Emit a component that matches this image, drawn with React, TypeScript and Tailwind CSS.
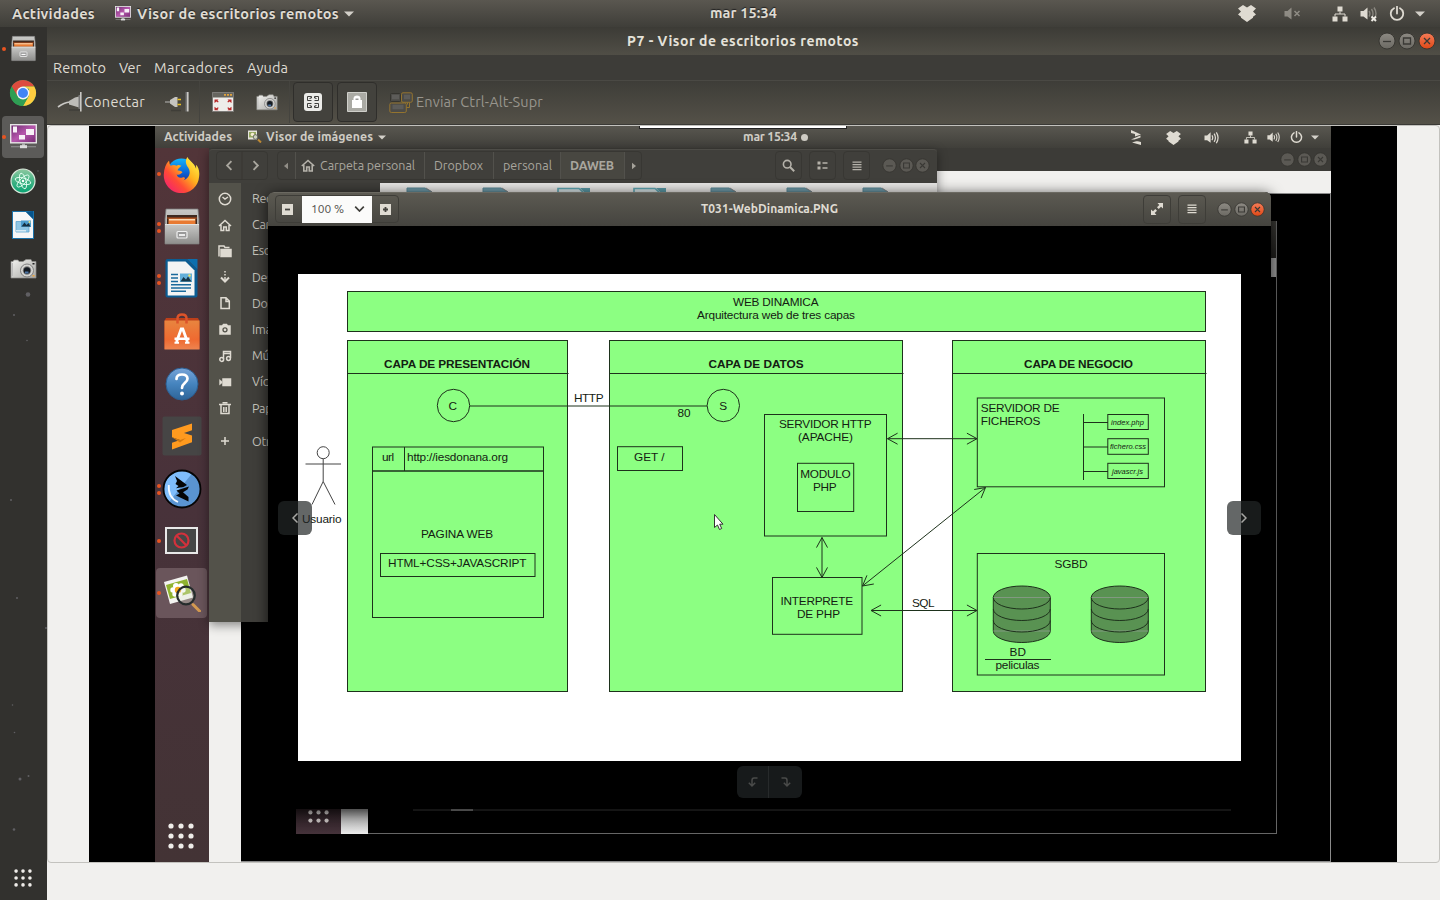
import React, { useLayoutEffect, useRef, useState } from "react";

/* One line of text whose letter spacing is tuned so that it fills a given width. */
function Label({ w, className = "", children }: { w: number; className?: string; children: string }) {
  const ref = useRef<HTMLSpanElement>(null);
  const [spacing, setSpacing] = useState(0);
  useLayoutEffect(() => {
    const el = ref.current;
    if (el) setSpacing((w - el.getBoundingClientRect().width) / children.length);
  }, [w, children]);
  return (
    <span className="block shrink-0 whitespace-nowrap" style={{ width: w }}>
      <span ref={ref} className={`inline-block ${className}`} style={{ letterSpacing: spacing }}>
        {children}
      </span>
    </span>
  );
}

type P = { className?: string };

const Caret = ({ className = "" }: P) => (
  <svg viewBox="0 0 10 6" className={`shrink-0 ${className}`}><path d="M0 .5h10L5 5.5z" fill="#d3d0c9" /></svg>
);

const Dropbox = ({ className = "" }: P) => (
  <svg viewBox="0 0 18 17" className={`shrink-0 ${className}`}>
    <path d="M5 0l4 2.5L13 0l5 3.5-3 3 3 3-3 2.2v1.1L9 17l-6-4.2v-1.1L0 9.500l3-3-3-3z" fill="#dfdbd2" />
  </svg>
);

const Network = ({ className = "" }: P) => (
  <svg viewBox="0 0 16 16" className={`shrink-0 ${className}`}>
    <path d="M5.500 .5h5v5h-5zM.5 10.500h5v5h-5zM10.500 10.500h5v5h-5z" fill="#dfdbd2" />
    <path d="M8 5.500v2.500M3 10.500V8h10v2.500" fill="none" stroke="#dfdbd2" />
  </svg>
);

const Power = ({ className = "" }: P) => (
  <svg viewBox="0 0 16 16" className={`shrink-0 ${className}`}>
    <path d="M5 2.200a6.200 6.200 0 1 0 6 0M8 .5v7" fill="none" stroke="#dfdbd2" strokeWidth="1.800" strokeLinecap="round" />
  </svg>
);

const Speaker = ({ className = "", kind }: P & { kind: "off" | "muted" | "on" | "wide" }) => (
  <svg viewBox="0 0 17 16" className={`shrink-0 ${className}`}>
    <path d="M.5 5H3.500L7.500 1.500v12L3.500 10.500H.5z" fill="#dfdbd2" />
    {kind === "off" && <path d="M10.500 5l5 5m0-5l-5 5" stroke="#dfdbd2" strokeWidth="1.500" />}
    {kind !== "off" && (
      <g fill="none" stroke="#dfdbd2" strokeWidth="1.400" opacity={kind === "muted" ? 0.4 : 1}>
        <path d="M9 5q1.800 2.700 0 5.500M11.500 3q3 4.700 0 9.500M14 1.500q4 6 0 12.500" />
      </g>
    )}
    {kind === "muted" && <path d="M11.500 10.500l4.500 4.500m0-4.500l-4.500 4.500" stroke="#eeebe4" strokeWidth="1.900" />}
  </svg>
);

const VinagreIcon = ({ className = "" }: P) => (
  <svg viewBox="0 0 27 25" className={`shrink-0 ${className}`}>
    <defs>
      <linearGradient id="vin" x1="0" y1="0" x2="1" y2="1">
        <stop offset="0" stopColor="#6b2a6d" /><stop offset=".5" stopColor="#b658ad" /><stop offset="1" stopColor="#752a73" />
      </linearGradient>
    </defs>
    <rect x=".7" y=".7" width="25.600" height="18.100" fill="url(#vin)" stroke="#e6e6e6" strokeWidth="1.400" />
    <path d="M3 2.500h4v6H3zM16 5h8v6h-8zM9 11h6v4.500H9z" fill="#f7f1f7" />
    <path d="M12 19h3v3h-3z" fill="#aaa" /><path d="M1 22.700h25" stroke="#8c8c8c" strokeWidth="1.200" />
    <path d="M10 21.200h7v3h-7z" fill="#ddd" />
  </svg>
);

const FilesIcon = ({ className = "" }: P) => (
  <svg viewBox="0 0 36 37" className={`shrink-0 ${className}`}>
    <defs>
      <linearGradient id="cab" x1="0" y1="0" x2="0" y2="1"><stop offset="0" stopColor="#c9c9c7" /><stop offset="1" stopColor="#8f8f8d" /></linearGradient>
    </defs>
    <path d="M2 1h32l1 10v25H1V11z" fill="url(#cab)" stroke="#777" strokeWidth=".8" />
    <path d="M3 7h30v10H3z" fill="#3e2a20" /><path d="M3 9h30v2H3z" fill="#7a3a1c" />
    <path d="M4.500 10.500h27v5.500h-27z" fill="#e87a32" /><path d="M5 11h26v1.500H5z" fill="#fbd9b4" />
    <path d="M1 16h34v19.500H1z" fill="url(#cab)" /><path d="M1 16.500h34" stroke="#e2e2e0" />
    <rect x="13" y="23.500" width="10" height="6.500" rx="1" fill="#999" stroke="#f0f0f0" strokeWidth="1.200" />
    <path d="M15 27h6" stroke="#fff" strokeWidth="1.600" />
  </svg>
);

const ChromeIcon = ({ className = "" }: P) => (
  <svg viewBox="0 0 28 28" className={`shrink-0 ${className}`}>
    <circle cx="14" cy="14" r="13" fill="#2f9e54" />
    <path d="M2.740 7.500A13 13 0 0 1 25.260 7.500H14L8.400 17.200z" fill="#dd4b3e" />
    <path d="M25.260 7.500A13 13 0 0 1 14 27l5.600-9.700L20 10l-6-2.500z" fill="#ffcd40" />
    <path d="M2.740 7.500L8.400 17.200 14 20l5.600-2.700L14 27A13 13 0 0 1 2.740 7.500z" fill="#2f9e54" />
    <circle cx="14" cy="14" r="6.400" fill="#f5f5f5" /><circle cx="14" cy="14" r="5" fill="#4285f4" />
  </svg>
);

const AtomIcon = ({ className = "" }: P) => (
  <svg viewBox="0 0 26 26" className={`shrink-0 ${className}`}>
    <defs><linearGradient id="atom" x1="0" y1="0" x2="0" y2="1"><stop offset="0" stopColor="#8dc9a0" /><stop offset=".55" stopColor="#3eb183" /><stop offset="1" stopColor="#08a373" /></linearGradient></defs>
    <circle cx="13" cy="13" r="12" fill="url(#atom)" stroke="#dce8dc" strokeWidth="1.200" />
    <g fill="none" stroke="#e5fff2" strokeWidth=".9">
      <ellipse cx="13" cy="13" rx="8" ry="3" transform="rotate(15 13 13)" />
      <ellipse cx="13" cy="13" rx="8" ry="3" transform="rotate(75 13 13)" />
      <ellipse cx="13" cy="13" rx="8" ry="3" transform="rotate(135 13 13)" />
    </g>
    <circle cx="13" cy="13" r="1.200" fill="#fff" />
  </svg>
);

const DrawDocIcon = ({ className = "" }: P) => (
  <svg viewBox="0 0 22 28" className={`shrink-0 ${className}`}>
    <path d="M0 0h22v28H0z" fill="#1b71a8" /><path d="M1 1h13l7 7v19H1z" fill="#f6f6f6" /><path d="M14 1l7 7V0z" fill="#07548b" />
    <path d="M4 10.500h13V21H4z" fill="#8fc6e5" stroke="#5ea6d0" strokeWidth=".8" />
    <path d="M9 9.500h10V16H9z" fill="#4d9dce" /><path d="M9.500 15.500l3-4 2 2.500 2-2 2 3.500z" fill="#163040" /><circle cx="17.500" cy="11" r="1" fill="#e8e27a" />
    <path d="M4 19h10v1.500H4z" fill="#d6eaf4" />
  </svg>
);

const WriterIcon = ({ className = "" }: P) => (
  <svg viewBox="0 0 33 39" className={`shrink-0 ${className}`}>
    <path d="M2.500 0H22l10.500 10.500V36.500a2 2 0 0 1-2 2h-28a2 2 0 0 1-2-2V2a2 2 0 0 1 2-2z" fill="#0b5c92" />
    <path d="M2.700 2.500h17.800l9 9V36.500H2.700z" fill="#f3f4f4" /><path d="M22 0h10.500v10.500z" fill="#0d6fae" />
    <path d="M6 15.500h7M6 19h7M6 22.500h7M6 25.800h20M6 29h20M6 32.300h15" stroke="#1b6a9c" strokeWidth="1.400" />
    <path d="M15 14.500h12v8.500H15z" fill="#62afd9" /><path d="M15.500 22.500l3-4.500 2.500 2.500 2-3 3.500 5z" fill="#17384a" /><circle cx="24.500" cy="16.500" r="1.200" fill="#f0e060" />
  </svg>
);

const CameraIcon = ({ className = "" }: P) => (
  <svg viewBox="0 0 27 20" className={`shrink-0 ${className}`}>
    <defs><linearGradient id="cam" x1="0" y1="0" x2="1" y2="1"><stop offset="0" stopColor="#f2f2ef" /><stop offset="1" stopColor="#a7a7a4" /></linearGradient></defs>
    <path d="M1 2.500h2L4 1h4l1 1.500h4L16 .5h5L22 2.500h4V19H1z" fill="url(#cam)" stroke="#8b8b88" strokeWidth=".7" />
    <circle cx="17" cy="11.500" r="6.500" fill="#d5d5d2" stroke="#777" strokeWidth=".9" /><circle cx="17" cy="11.500" r="4.200" fill="#777" />
    <circle cx="17" cy="11.500" r="3.200" fill="#151b22" /><path d="M15 12.500h3.500v2H15z" fill="#4d75a5" />
    <path d="M2.500 4v13" stroke="#bbb" /><path d="M22.500 4h2v1.500h-2z" fill="#222" /><path d="M22.500 16h2v1.500h-2z" fill="#eba13a" />
  </svg>
);

const FirefoxIcon = ({ className = "" }: P) => (
  <svg viewBox="0 0 38 38" className={`shrink-0 ${className}`}>
    <defs>
      <linearGradient id="ffx" x1="1" y1="0" x2="0" y2="1"><stop offset=".1" stopColor="#fff044" /><stop offset=".4" stopColor="#ffb01e" /><stop offset=".65" stopColor="#ff4c35" /><stop offset="1" stopColor="#f01285" /></linearGradient>
      <linearGradient id="ffb" x1="0" y1="0" x2="0" y2="1"><stop offset="0" stopColor="#12b5fb" /><stop offset=".5" stopColor="#0b63d6" /><stop offset="1" stopColor="#2c1672" /></linearGradient>
    </defs>
    <circle cx="19" cy="17" r="14.500" fill="url(#ffb)" />
    <path d="M25 1c-3 5-1 8 1 11 3 5 1 11-5 13 3-2 1-4-1-3-3 1-5 0-6-3 3 1 4-1 6-2-1-2-4-2-5-2 0-2 2-3 4-5-3-1-4-1-5 0-2-1-4-1-6 0-2-2-1-4-2-5C3 8 1 13 .8 19a18 18 0 0 0 36.300 2c.8-6-1.100-10-3.100-12v4c-2-6-6-7-9-12z" fill="url(#ffx)" />
  </svg>
);

const SoftwareIcon = ({ className = "" }: P) => (
  <svg viewBox="0 0 36 37" className={`shrink-0 ${className}`}>
    <defs><linearGradient id="bag" x1="0" y1="0" x2="0" y2="1"><stop offset="0" stopColor="#e8853f" /><stop offset=".65" stopColor="#ef6a31" /><stop offset="1" stopColor="#ee8450" /></linearGradient></defs>
    <path d="M2 5h32l1.500 3v28H.5V8z" fill="#bd3f1a" /><path d="M.5 7.500h35V36.500H.5z" fill="url(#bag)" />
    <path d="M13.500 10.500V5.500q0-4 4.500-4t4.500 4v5" fill="none" stroke="#dc532a" strokeWidth="2.500" />
    <path d="M12.500 29l4.700-13h1.600l4.700 13" fill="none" stroke="#fff" strokeWidth="2.800" /><path d="M10.500 24.500h15v2.500h-15z" fill="#fff" />
    <path d="M10.500 29.800h4.500m6 0h4.500" stroke="#fff" strokeWidth="2" />
  </svg>
);

const HelpIcon = ({ className = "" }: P) => (
  <svg viewBox="0 0 34 34" className={`shrink-0 ${className}`}>
    <defs><linearGradient id="hlp" x1="0" y1="0" x2="0" y2="1"><stop offset="0" stopColor="#78a4d8" /><stop offset=".5" stopColor="#4584be" /><stop offset="1" stopColor="#2d6498" /></linearGradient></defs>
    <circle cx="17" cy="17" r="16" fill="url(#hlp)" stroke="#2c5f92" />
    <path d="M11.500 12q0-4.500 5.500-4.500t5.500 4.300c0 4-5.500 4.200-5.500 9.200" fill="none" stroke="#fff" strokeWidth="2.700" strokeLinecap="round" /><circle cx="17" cy="26.500" r="2" fill="#fff" />
  </svg>
);

const SublimeIcon = ({ className = "" }: P) => (
  <svg viewBox="0 0 40 40" className={`shrink-0 ${className}`}>
    <rect x=".5" y=".5" width="39" height="39" rx="2" fill="#464545" />
    <path d="M10 14l20-6.500v6.700l-8 2.700 8 2.600v6.700L10 33.500V26.800l8-2.800-8-2.700z" fill="#ff9a1f" /><path d="M10 21.300l8 2.700 6-2-6 4.500z" fill="#d67a10" />
  </svg>
);

const ZealIcon = ({ className = "" }: P) => (
  <svg viewBox="0 0 40 40" className={`shrink-0 ${className}`}>
    <circle cx="20" cy="20" r="18.500" fill="#5a94d1" /><path d="M30 4.500A18.500 18.500 0 0 0 7 33z" fill="#7fbdfb" />
    <circle cx="20" cy="20" r="18.500" fill="none" stroke="#050505" strokeWidth="1.800" />
    <path d="M13 7l12 9-3.500 2-7.500 1.300 2.500-2.300-3-2 1.500-3z" fill="#060606" /><path d="M14.500 21.500l12.500-4-1.500 3-4.500 2.800 5.500 4.700v4.500L14 26.500l3.500-2z" fill="#060606" />
    <path d="M6.800 16q-1 12.500 9.200 17" fill="none" stroke="#f4faff" strokeWidth="1.800" />
  </svg>
);

const BlockedIcon = ({ className = "" }: P) => (
  <svg viewBox="0 0 33 27" className={`shrink-0 ${className}`}>
    <rect x="1" y="1" width="31" height="25" fill="#464646" stroke="#e9e9e9" strokeWidth="2" />
    <circle cx="16.500" cy="13.500" r="7" fill="none" stroke="#d2313c" strokeWidth="2.200" /><path d="M11.500 8.500l10 10" stroke="#d2313c" strokeWidth="2.200" />
  </svg>
);

const EogIcon = ({ className = "" }: P) => (
  <svg viewBox="0 0 38 38" className={`shrink-0 ${className}`}>
    <path d="M1 8L24 1.500l6 22L7 30z" fill="#f4f4f1" /><path d="M3 11L24 5l4 14L7 25z" fill="#8fb32f" />
    <g fill="#fff"><circle cx="13" cy="12" r="3" /><circle cx="18" cy="12" r="2.700" /><circle cx="10" cy="16" r="2.700" /><circle cx="12" cy="20" r="2.700" /><circle cx="17" cy="20" r="2.700" /><circle cx="20" cy="16" r="2.700" /></g>
    <circle cx="15" cy="16" r="3.200" fill="#f3a71d" />
    <path d="M30 30.500l6.500 6.500" stroke="#d49a50" strokeWidth="3" strokeLinecap="round" />
    <circle cx="23" cy="21.500" r="8.800" fill="#dfe6d5" fillOpacity=".35" stroke="#252c2c" strokeWidth="2.200" />
  </svg>
);

/* Nine-dot "show applications" glyph. */
const AppsGrid = ({ className = "", rows = 3 }: P & { rows?: number }) => (
  <svg viewBox={`0 0 26 ${rows * 10 - 4}`} className={`shrink-0 ${className}`}>
    {Array.from({ length: rows * 3 }, (_, i) => (
      <circle key={i} cx={3 + (i % 3) * 10} cy={3 + Math.floor(i / 3) * 10} r="2.600" fill="#efece9" />
    ))}
  </svg>
);

const RoundButton = ({ kind, tone, className }: { kind: "min" | "max" | "close"; tone: "active" | "hot" | "dim"; className: string }) => (
  <svg viewBox="0 0 18 18" className={`shrink-0 ${className}`}>
    <defs>
      <linearGradient id="rbg" x1="0" y1="0" x2="0" y2="1"><stop offset="0" stopColor="#8d8a83" /><stop offset="1" stopColor="#6b6963" /></linearGradient>
      <linearGradient id="rbh" x1="0" y1="0" x2="0" y2="1"><stop offset="0" stopColor="#f57c58" /><stop offset="1" stopColor="#df4816" /></linearGradient>
    </defs>
    <circle cx="9" cy="9" r="8" fill={tone === "hot" ? "url(#rbh)" : tone === "active" ? "url(#rbg)" : "#5b5954"} stroke="#33322e" strokeWidth=".9" />
    <g fill="none" stroke="#3a3935" strokeWidth="1.300">
      {kind === "min" && <path d="M5 9.500h8" />}
      {kind === "max" && <path d="M5.500 6h7v6h-7z" />}
      {kind === "close" && <path d="M6 6l6 6m0-6l-6 6" />}
    </g>
  </svg>
);

const WindowButtons = ({ tones, size, className }: { tones: ("active" | "hot" | "dim")[]; size: string; className: string }) => (
  <div className={`flex shrink-0 items-center ${className}`}>
    <RoundButton kind="min" tone={tones[0]} className={size} />
    <RoundButton kind="max" tone={tones[1]} className={size} />
    <RoundButton kind="close" tone={tones[2]} className={size} />
  </div>
);

const Dots = ({ n, className }: { n: number; className: string }) => (
  <div className={`flex shrink-0 flex-col ${className}`}>
    {Array.from({ length: n }, (_, i) => <span key={i} className="block size-1 rounded-full bg-[#e95420]" />)}
  </div>
);

const HomeGlyph = ({ className = "", color = "#dfdbd2" }: P & { color?: string }) => (
  <svg viewBox="0 0 14 13" className={`shrink-0 ${className}`}>
    <path d="M.8 7L7 1.500 13.200 7M2.800 6v6h2.900V8h2.600v4h2.900V6" fill="none" stroke={color} strokeWidth="1.600" />
  </svg>
);

const BurgerGlyph = ({ className = "", color = "#cfccc4" }: P & { color?: string }) => (
  <svg viewBox="0 0 10 10" className={`shrink-0 ${className}`}><path d="M.5 1.200h9M.5 3.700h9M.5 6.200h9M.5 8.700h9" stroke={color} strokeWidth="1.300" /></svg>
);

/* ---------- Host desktop ---------- */

function HostTopBar() {
  return (
    <header className="flex h-[27px] shrink-0 items-center bg-linear-to-b from-[#5a5750] to-[#3f3e39] pl-3 text-[14.500px] font-semibold text-[#dfdbd2] text-shadow-[0_-1px_1px_#222]">
      <div className="pt-px"><Label w={83}>Actividades</Label></div>
      <VinagreIcon className="mr-1.5 ml-5 h-[15px] w-4" />
      <div className="pt-px"><Label w={202}>Visor de escritorios remotos</Label></div>
      <Caret className="ml-[5px] h-[6px] w-[10px]" />
      <div className="mb-px ml-[356px]"><Label w={67}>mar 15:34</Label></div>
      <Dropbox className="ml-[461px] h-[17px] w-[18px]" />
      <Speaker kind="off" className="ml-7 h-4 w-[17px] opacity-45" />
      <Network className="ml-[31px] h-4 w-4" />
      <Speaker kind="muted" className="ml-3 h-4 w-[17px]" />
      <Power className="ml-3 size-4" />
      <Caret className="ml-[10px] h-[6px] w-[10px]" />
    </header>
  );
}

function DockSlot({ n = 0, active = false, children }: { n?: number; active?: boolean; children: React.ReactNode }) {
  return (
    <div className="flex h-11 shrink-0 items-center">
      <div className="w-[2px]" />
      <div className={`relative flex h-[42px] w-[42px] items-center justify-center rounded ${active ? "bg-[#5c5b59]" : ""}`}>
        {children}
        {n > 0 && <Dots n={n} className="absolute top-[19px] left-0" />}
      </div>
    </div>
  );
}

function HostDock() {
  return (
    <nav className="relative flex w-[47px] shrink-0 flex-col justify-between bg-[#32312e]">
      <svg viewBox="0 0 47 873" className="absolute inset-0 h-[873px] w-[47px]">
        <g fill="#74737a" opacity=".7">
          <circle cx="28" cy="267.500" r="2.300" /><circle cx="14" cy="288" r="1" /><circle cx="27" cy="313.500" r=".8" />
          <circle cx="11" cy="473" r="1" /><circle cx="17" cy="571" r="1" /><circle cx="46" cy="601" r="1" /><circle cx="12.500" cy="678" r=".8" />
          <circle cx="14.500" cy="705.500" r=".8" /><circle cx="28.500" cy="749" r="1" /><circle cx="20" cy="752" r="1.500" /><circle cx="14" cy="802.500" r="1.300" /><circle cx="38" cy="144" r=".7" />
        </g>
      </svg>
      <div className="relative flex flex-col">
        <DockSlot n={1}><FilesIcon className="mb-[2px] h-[27px] w-[25px]" /></DockSlot>
        <DockSlot><ChromeIcon className="size-7" /></DockSlot>
        <DockSlot n={1} active><VinagreIcon className="mb-px h-[25px] w-[27px]" /></DockSlot>
        <DockSlot><AtomIcon className="size-[26px]" /></DockSlot>
        <DockSlot><DrawDocIcon className="h-7 w-[22px]" /></DockSlot>
        <DockSlot><CameraIcon className="h-5 w-[27px]" /></DockSlot>
      </div>
      <AppsGrid className="relative mb-[13px] ml-[14px] size-[18px]" />
    </nav>
  );
}

const PlugIcon = ({ className = "" }: P) => (
  <svg viewBox="0 0 26 22" className={`shrink-0 ${className}`}>
    <path d="M1 16q6-4.500 12-5" fill="none" stroke="#c9c8c4" strokeWidth="1.700" /><path d="M12 10l6-3.500 4-1v11l-5-1.500-5-1.500z" fill="#bdbcb8" />
    <path d="M12 19h11" stroke="#33322f" strokeWidth="1.500" opacity=".5" /><path d="M21.500 4h1.500v14h-1.500z" fill="#777" /><path d="M23 1h1.600v19.500H23z" fill="#c9c8c4" />
  </svg>
);

const UnplugIcon = ({ className = "" }: P) => (
  <svg viewBox="0 0 26 22" className={`shrink-0 ${className}`}>
    <path d="M1 11h7" stroke="#8f8e8a" strokeWidth="1.600" /><path d="M6 9l5-3h2.500v10H11l-5-3.500z" fill="#c6c5c1" />
    <path d="M13.500 8.500h3.500M13.500 13.500h3.500" stroke="#e9bf20" strokeWidth="1.700" /><path d="M7 19.500h10" stroke="#33322f" strokeWidth="1.500" opacity=".5" />
    <path d="M21.500 1h1.500v19.500h-1.500z" fill="#777" /><path d="M23 1h1.600v19.500H23z" fill="#c9c8c4" />
  </svg>
);

const FullscreenIcon = ({ className = "" }: P) => (
  <svg viewBox="0 0 22 20" className={`shrink-0 ${className}`}>
    <path d="M.5.5h21v19H.5z" fill="#eeedea" stroke="#7c7b78" /><path d="M1 1h20v4.500H1z" fill="#66655f" />
    <path d="M12 2h2v1.700h-2zM15 2h2v1.700h-2zM18 2h2v1.700h-2z" fill="#e2a33c" />
    <path d="M2.500 7.500h4l-1 1 1.200 1.300-.8.800-1.400-1.100-2 1.500zM19.500 7.500h-4l1 1-1.200 1.300.8.800 1.400-1.100 2 1.500zM2.500 18.300h4l-1-1 1.200-1.300-.8-.8-1.400 1.100-2-1.500zM19.500 18.300h-4l1-1-1.200-1.300.8-.8 1.400 1.100 2-1.500z" fill="#b92a2a" />
  </svg>
);

const KeysIcon = ({ className = "" }: P) => (
  <svg viewBox="0 0 24 21" className={`shrink-0 ${className}`}>
    <g fill="#4c4b47" stroke="#35342f" strokeWidth="1"><rect x="1.500" y="1.500" width="10" height="8" rx="1" /><rect x="12.500" y=".8" width="10.800" height="9.500" rx="1.500" stroke="#94742f" /><rect x=".8" y="11" width="16.500" height="9.500" rx="1.500" stroke="#94742f" /></g>
    <path d="M3 2.800h7v4.500H3zM15 2.800h6v4.500h-6zM3.500 12.800h11v4.500h-11z" fill="#5d5c59" /><path d="M20.500 10.500v5h-3M18.500 10.500v2" fill="none" stroke="#94742f" />
  </svg>
);

function HostWindowChrome() {
  return (
    <>
      <div className="flex h-7 shrink-0 items-center bg-linear-to-b from-[#3c3b36] to-[#504e46] text-[14px] font-bold text-[#e5e2da]">
        <div className="ml-[580px]"><Label w={232}>P7 - Visor de escritorios remotos</Label></div>
        <WindowButtons tones={["active", "active", "hot"]} size="size-[18px]" className="ml-[519px] gap-[2px]" />
      </div>
      <div className="flex h-[25px] shrink-0 items-center bg-[#3d3c38] pt-px pl-1.5 text-[14.500px] text-[#dfdbd2]">
        <Label w={53}>Remoto</Label>
        <div className="ml-[13px]"><Label w={22}>Ver</Label></div>
        <div className="ml-[13px]"><Label w={80}>Marcadores</Label></div>
        <div className="ml-[13px]"><Label w={41}>Ayuda</Label></div>
      </div>
      <div className="flex h-[45px] shrink-0 items-center border-t border-b border-t-[#4a4944] border-b-[#3b3a36] bg-linear-to-b from-[#3e3d38] to-[#545148] pb-px text-[14.500px] text-[#dfdbd2]">
        <PlugIcon className="ml-[10px] h-[22px] w-[26px]" />
        <div className="ml-[1px]"><Label w={61}>Conectar</Label></div>
        <UnplugIcon className="ml-[19px] h-[22px] w-[26px]" />
        <div className="ml-[9px] h-full w-px bg-[#45443f]" />
        <FullscreenIcon className="ml-3 h-5 w-[22px]" />
        <CameraIcon className="ml-[22px] h-[19px] w-[22px]" />
        <div className="ml-[11px] h-full w-px bg-[#45443f]" />
        <div className="ml-[3px] flex h-10 w-10 items-center justify-center rounded border border-[#2f2e2b] bg-[#43423d]">
          <svg viewBox="0 0 18 18" className="size-[18px]">
            <rect width="18" height="18" rx="3" fill="#ebebe8" />
            <path d="M7.500 7.500h-4v-4h4v1.500h-1.500v1M10.500 7.500h4v-4h-4v1.500h1.500v1M7.500 10.500h-4v4h4v-1.500h-1.500v-1M10.500 10.500h4v4h-4v-1.500h1.500v-1" fill="none" stroke="#3f3f3d" strokeWidth="1" />
          </svg>
        </div>
        <div className="ml-1 flex h-10 w-10 items-center justify-center rounded border border-[#2f2e2b] bg-[#43423d]">
          <svg viewBox="0 0 20 20" className="size-5">
            <path d="M.5.5h19v19H.5z" fill="#aaaaa4" stroke="#cfcfca" /><path d="M5 8h10v8H5z" fill="#fff" /><path d="M7 9V6q0-2 3-2t3 2v3" fill="#fff" stroke="#fff" strokeWidth="1" /><path d="M8.500 6.500h3V8h-3z" fill="#999" />
          </svg>
        </div>
        <KeysIcon className="ml-3 h-[21px] w-6" />
        <div className="ml-[3px] text-[#98958d]"><Label w={127}>Enviar Ctrl-Alt-Supr</Label></div>
      </div>
    </>
  );
}

/* ---------- Remote desktop ---------- */

function RemoteTopBar() {
  return (
    <div className="flex h-[22px] shrink-0 items-center bg-linear-to-b from-[#595750] to-[#403f3a] pt-px pl-[9px] text-[12.300px] font-semibold text-[#cfccc4]">
      <Label w={68}>Actividades</Label>
      <svg viewBox="0 0 14 13" className="mb-[2px] ml-4 h-[13px] w-[14px] shrink-0">
        <path d="M0 .5h9v9H0z" fill="#e6e4dd" /><path d="M1 2h7v5.500H1z" fill="#96a860" /><circle cx="4.500" cy="4.500" r="1.800" fill="#f3ecd2" /><circle cx="7.500" cy="7" r="2.300" fill="#ccd0bb" stroke="#555" strokeWidth=".8" /><path d="M10 9.500l3 3" stroke="#bf8a35" strokeWidth="2" />
      </svg>
      <div className="ml-1"><Label w={107}>Visor de imágenes</Label></div>
      <Caret className="ml-[5px] h-[5px] w-2" />
      <div className="ml-[357px]"><Label w={54}>mar 15:34</Label></div>
      <span className="ml-1 block size-[7px] rounded-full bg-[#cfccc4]" />
      <svg viewBox="0 0 12 15" className="ml-[322px] h-[15px] w-3 shrink-0"><path d="M1 0l10 4.500L5 6.500V4L1 3zM1 9.500l9.500-4V7.500L4.500 9.500zM1 9.500l10 2.500v3L2 12.500l5-1.500z" fill="#dfdbd2" /></svg>
      <Dropbox className="ml-6 h-[14px] w-[15px]" />
      <Speaker kind="wide" className="ml-[23px] h-[14px] w-[15px]" />
      <Network className="ml-[25px] size-[13px]" />
      <Speaker kind="on" className="ml-[10px] h-[13px] w-[13px]" />
      <Power className="ml-[10px] size-[13px]" />
      <Caret className="ml-2 h-[5px] w-2" />
    </div>
  );
}

function RemoteSlot({ n = 0, active = false, children }: { n?: number; active?: boolean; children: React.ReactNode }) {
  return (
    <div className="flex h-[52.4px] shrink-0 items-center">
      <div className={`relative ml-px flex h-[50px] w-[51px] items-center justify-center rounded ${active ? "bg-[#6a555b]" : ""}`}>
        {children}
        {n > 0 && <Dots n={n} className={n > 1 ? "absolute top-[20px] left-px gap-[3px]" : "absolute top-[23px] left-px"} />}
      </div>
    </div>
  );
}

function RemoteDock() {
  return (
    <div className="flex w-[54px] shrink-0 flex-col justify-between bg-linear-to-b from-[#523539] via-[#48323a] to-[#433335]">
      <div className="flex flex-col">
        <RemoteSlot n={1}><FirefoxIcon className="size-[37px]" /></RemoteSlot>
        <RemoteSlot n={2}><FilesIcon className="h-[37px] w-9" /></RemoteSlot>
        <RemoteSlot n={2}><WriterIcon className="h-[39px] w-[33px]" /></RemoteSlot>
        <RemoteSlot><SoftwareIcon className="h-[37px] w-9" /></RemoteSlot>
        <RemoteSlot><HelpIcon className="size-[34px]" /></RemoteSlot>
        <RemoteSlot><SublimeIcon className="size-10" /></RemoteSlot>
        <RemoteSlot n={2}><ZealIcon className="size-10" /></RemoteSlot>
        <RemoteSlot n={1}><BlockedIcon className="h-[27px] w-[33px]" /></RemoteSlot>
        <RemoteSlot n={1} active><EogIcon className="size-[38px]" /></RemoteSlot>
      </div>
      <AppsGrid className="mb-[13px] ml-[13px] size-[26px]" />
    </div>
  );
}

/* Maximised remote viewer that lies behind the other windows. */
function BackWindow() {
  return (
    <div className="flex min-w-0 flex-1 flex-col bg-[#f1f0ee]">
      <div className="flex h-[23px] shrink-0 items-center justify-end bg-[#3c3b37] pr-[3px]">
        <WindowButtons tones={["dim", "dim", "dim"]} size="size-[15px]" className="gap-[1.500px]" />
      </div>
      <div className="mt-[22px] ml-8 flex-1 border-t border-r border-b border-[#8b8b8b] bg-black" />
    </div>
  );
}

/* What is left in sight of the desktop nested inside the back window. */
function NestedDesktop() {
  return (
    <>
      <div className="absolute top-[95px] left-[141px] flex h-[613px] w-[981px] flex-col items-end border-r border-b border-[#666] bg-black">
        <div className="h-[37px] w-[6px] bg-linear-to-b from-[#3a3935] to-[#1e1d1b]" />
        <div className="h-[19px] w-[6px] bg-[#9a9a9a]" />
      </div>
      <div className="absolute top-[683px] left-[141px] flex h-[25px] w-[72px]">
        <div className="flex w-[45px] justify-center bg-linear-to-b from-[#23191d] to-[#46333b]"><AppsGrid rows={2} className="mt-px h-[13px] w-[21px] opacity-75" /></div>
        <div className="w-[27px] bg-linear-to-b from-[#8a8a8a] to-[#ececec]" />
      </div>
      <div className="absolute top-[683px] left-[258px] flex h-[2px] w-[818px] bg-[#222]"><div className="ml-[38px] w-[22px] bg-[#777]" /></div>
    </>
  );
}

function PathCell({ className = "", children }: { className?: string; children: React.ReactNode }) {
  return <div className={`flex h-full shrink-0 items-center border-r border-[#52514c] ${className}`}>{children}</div>;
}

const sidebar: { text: string; glyph: React.ReactNode }[] = [
  { text: "Rec", glyph: <><circle cx="8" cy="8" r="5.700" fill="none" /><path d="M5.500 6l2.500 2 3-2" fill="none" /></> },
  { text: "Car", glyph: <path d="M2 9l6-5.500L14 9M4 8v5.500h2.700V10h2.600v3.500H12V8" fill="none" /> },
  { text: "Esc", glyph: <><path d="M2 13.500V3h5l1 1.500h4.500" fill="none" /><path d="M4 6.500h10V13.500H4z" fill="#dfdbd2" /></> },
  { text: "Des", glyph: <><path d="M8 2v1.500M8 5v1.500M8 8v4" fill="none" /><path d="M4 8.500l4 4 4-4" fill="none" strokeWidth="2" /></> },
  { text: "Do", glyph: <path d="M4 2.800h5l3.300 3.300v7.400H4zM9 3v3.500h3" fill="none" /> },
  { text: "Im\u00e1", glyph: <><path d="M3 5h2.500l1-1.500h3L10.500 5H13v8H3z" fill="#dfdbd2" /><circle cx="8" cy="8.800" r="2" fill="#dfdbd2" stroke="#53524a" strokeWidth="1.300" /></> },
  { text: "M\u00fa", glyph: <><path d="M6.500 11V3.500h7V10M6.500 5.500h7" fill="none" /><circle cx="4.700" cy="11.500" r="1.900" fill="none" /><circle cx="11.500" cy="10.500" r="1.900" fill="none" /></> },
  { text: "V\u00edc", glyph: <><path d="M6 5h7.500v6.500H6z" fill="#dfdbd2" /><path d="M2.500 5.500v5.500L5 9V7.500z" fill="#dfdbd2" strokeWidth=".4" /></> },
  { text: "Pap", glyph: <path d="M2 4.500h12M5.500 2.800h5M4 5v8.500h8V5M6.800 7v5M9.200 7v5" fill="none" /> },
  { text: "Otr", glyph: <path d="M8 4v8M4 8h8" fill="none" /> },
];

function FileManager() {
  return (
    <div className="absolute top-[23px] left-[54px] flex h-[473px] w-[728px] flex-col text-[12.500px] text-[#a9a69e] shadow-[0_3px_10px_rgba(0,0,0,0.45)]">
      <div className="flex h-[34px] shrink-0 items-center rounded-t border-t border-[#4d4c47] bg-[#403f3b] pb-[2px] pl-[7px]">
        <div className="flex h-[29px] w-[52px] shrink-0 items-center rounded border border-[#383733]">
          <svg viewBox="0 0 52 29" className="h-[29px] w-[52px]"><path d="M15 10l-4.500 4.500 4.500 4.500M38 10l4.500 4.500L38 19" fill="none" stroke="#a9a69e" strokeWidth="1.900" /><path d="M26 0v29" stroke="#383733" /></svg>
        </div>
        <div className="ml-[9px] flex h-[29px] w-[365px] shrink-0 items-center rounded border border-[#383733]">
          <PathCell className="w-[18px] justify-center pr-[2px]"><svg viewBox="0 0 5 8" className="h-2 w-[4px]"><path d="M5 0v8L0 4z" fill="#918e87" /></svg></PathCell>
          <PathCell className="w-[129px] pl-[5px]"><HomeGlyph className="mr-[5px] h-[13px] w-[14px]" color="#b5b2aa" /><Label w={95}>Carpeta personal</Label></PathCell>
          <PathCell className="w-[69px] pl-[9px]"><Label w={49}>Dropbox</Label></PathCell>
          <PathCell className="w-[67px] pl-[9px]"><Label w={49}>personal</Label></PathCell>
          <PathCell className="w-[64px] bg-[#484741] pl-[9px] font-bold"><Label w={44}>DAWEB</Label></PathCell>
          <svg viewBox="0 0 5 8" className="ml-[7px] h-2 w-[4px]"><path d="M0 0v8l5-4z" fill="#a5a29a" /></svg>
        </div>
        <div className="ml-[133px] flex gap-[7px]">
          <div className="flex h-[29px] w-[27px] items-center justify-center rounded border border-[#383733]">
            <svg viewBox="0 0 13 13" className="size-[13px]"><circle cx="5.200" cy="5.200" r="3.800" fill="none" stroke="#b5b2aa" strokeWidth="1.600" /><path d="M8 8l4.200 4.200" stroke="#b5b2aa" strokeWidth="2" /></svg>
          </div>
          <div className="flex h-[29px] w-[27px] items-center justify-center rounded border border-[#383733]">
            <svg viewBox="0 0 11 9" className="h-[9px] w-[11px]"><path d="M.5.5h3v3h-3zM.5 5.500h3v3h-3zM5.500 1.300h5v1.500h-5zM5.500 6.300h5v1.500h-5z" fill="#b5b2aa" /></svg>
          </div>
          <div className="flex h-[29px] w-[27px] items-center justify-center rounded border border-[#383733]"><BurgerGlyph className="size-[10px]" color="#b5b2aa" /></div>
        </div>
        <WindowButtons tones={["dim", "dim", "dim"]} size="size-[15px]" className="ml-[12px] gap-[1.500px]" />
      </div>
      <div className="flex min-h-0 flex-1">
        <div className="flex w-8 shrink-0 flex-col items-center bg-[#53524a] pt-[2.500px]">
          {sidebar.map((s, i) => (
            <svg key={s.text} viewBox="0 0 16 16" className={`h-4 w-4 shrink-0 ${i === 9 ? "mt-[17.100px]" : i === 0 ? "mt-[5px]" : "mt-[10.200px]"}`} stroke="#dfdbd2" strokeWidth="1.500">{s.glyph}</svg>
          ))}
        </div>
        <div className="flex w-[139px] shrink-0 flex-col overflow-hidden bg-[#3f3e3a] pt-[2px] pl-[11px] text-[12.500px] tracking-[-0.3px] text-[#c5c2ba]">
          {sidebar.map((s, i) => (
            <span key={s.text} className={`block h-4 shrink-0 leading-4 ${i === 9 ? "mt-[17.100px]" : i === 0 ? "mt-[5px]" : "mt-[10.200px]"}`}>{s.text}</span>
          ))}
        </div>
        <div className="flex-1 bg-[#e8e7e5]">
          <svg viewBox="0 0 557 9" className="block h-[9px] w-[557px]">
            {[27, 103, 331, 407, 483].map((x) => <g key={x}><path d={`M${x} 5h18l7 4H${x}z`} fill="#6e9aa8" stroke="#5b8795" /><path d={`M${x + 19} 5l6 4`} stroke="#888" /></g>)}
            {[178, 254].map((x) => <g key={x}><path d={`M${x} 9V5.500h21l4 3.500`} fill="#d7e3e5" stroke="#5fa6b2" strokeWidth="1.600" /><path d={`M${x + 22} 5h10V9h-6z`} fill="#5b9aa6" /></g>)}
          </svg>
        </div>
      </div>
    </div>
  );
}

/* ---------- Diagram shown by the image viewer ---------- */

type TextProps = { x: number; y: number; w: number; size?: number; bold?: boolean; italic?: boolean; children: string };
const T = ({ x, y, w, size = 11.8, bold, italic, children }: TextProps) => (
  <text x={x} y={y} textLength={w} fontSize={size} fontWeight={bold ? 700 : 400} fontStyle={italic ? "italic" : "normal"} stroke="none" fill="#142012">{children}</text>
);

const Box = ({ x1, y1, x2, y2, fill = "none" }: { x1: number; y1: number; x2: number; y2: number; fill?: string }) => (
  <rect x={x1} y={y1} width={x2 - x1} height={y2 - y1} fill={fill} />
);

function DoubleArrow({ x1, y1, x2, y2 }: { x1: number; y1: number; x2: number; y2: number }) {
  const a = Math.atan2(y2 - y1, x2 - x1);
  const head = (x: number, y: number, dir: number) => {
    const p = (d: number) => `${x + 11.5 * Math.cos(dir + d)} ${y + 11.5 * Math.sin(dir + d)}`;
    return `M${p(0.5)}L${x} ${y}L${p(-0.5)}`;
  };
  return <path d={`M${x1} ${y1}L${x2} ${y2}${head(x1, y1, a)}${head(x2, y2, a + Math.PI)}`} fill="none" />;
}

const Cylinder = ({ x }: { x: number }) => (
  <g transform={`translate(${x} 0)`}>
    <path d="M0 597.500a28.500 11.500 0 0 1 57 0V631a28.500 11.500 0 0 1-57 0z" fill="#599252" />
    <path d="M0 597.500h57M0 631h57" stroke="#829981" />
    <path d="M0 597.500a28.500 11.500 0 0 0 57 0M0 609a28.500 11.500 0 0 0 57 0M0 620.500a28.500 11.500 0 0 0 57 0" fill="none" />
  </g>
);

function Diagram() {
  const green = "#8cff82";
  return (
    <svg viewBox="298 274 943 487" className="block h-[487px] w-[943px] shrink-0 bg-white font-['Liberation_Sans',sans-serif]" stroke="#1d311b" strokeWidth="1">
      <Box x1={347.5} y1={291.5} x2={1205.5} y2={331.5} fill={green} />
      <Box x1={347.5} y1={340.500} x2={567.5} y2={691.5} fill={green} />
      <Box x1={609.5} y1={340.500} x2={902.5} y2={691.5} fill={green} />
      <Box x1={952.5} y1={340.500} x2={1205.5} y2={691.5} fill={green} />
      <path d="M347.500 373.500H568.500M609.500 373.500H903.500M952.500 373.500H1206.500" />
      <T x={733} y={306} w={85.500}>WEB DINAMICA</T>
      <T x={697} y={319} w={158}>Arquitectura web de tres capas</T>
      <T x={384} y={368} w={146} bold>CAPA DE PRESENTACIÓN</T>
      <T x={708.5} y={368} w={95} bold>CAPA DE DATOS</T>
      <T x={1024} y={368} w={109} bold>CAPA DE NEGOCIO</T>

      <g fill="none"><circle cx="453.500" cy="405.500" r="16.200" /><circle cx="723.300" cy="405.500" r="16.200" /></g>
      <path d="M470 406H707" />
      <T x={448.500} y={410} w={8}>C</T>
      <T x={719.300} y={410} w={7.500}>S</T>
      <T x={574} y={402} w={29.500}>HTTP</T>
      <T x={677.5} y={417} w={13}>80</T>

      <Box x1={372.500} y1={447} x2={543.500} y2={617.500} />
      <path d="M372 471H544" strokeWidth="1.600" /><path d="M404.500 447V471" />
      <T x={382} y={461} w={12}>url</T>
      <T x={407} y={461} w={101}>http://iesdonana.org</T>
      <T x={421} y={538} w={72}>PAGINA WEB</T>
      <Box x1={380.500} y1={553.500} x2={535} y2={576.500} />
      <T x={388} y={567} w={138.500}>HTML+CSS+JAVASCRIPT</T>

      <g fill="none" stroke="#444"><circle cx="323.200" cy="452.700" r="6" /><path d="M323.200 459V481.500L312 504.500M323.200 481.500L335 504.500M305.500 464H341" /></g>
      <T x={302} y={523} w={39.500}>Usuario</T>

      <Box x1={617.500} y1={446.700} x2={682.500} y2={470.500} />
      <T x={634} y={461} w={30.500}>GET /</T>
      <Box x1={764.500} y1={414.500} x2={886.500} y2={536} />
      <T x={779} y={428} w={92.500}>SERVIDOR HTTP</T>
      <T x={798} y={441} w={55}>(APACHE)</T>
      <Box x1={797.500} y1={463.300} x2={853.700} y2={511.500} />
      <T x={800.300} y={478} w={50.500}>MODULO</T>
      <T x={813} y={491} w={23.500}>PHP</T>
      <Box x1={772.500} y1={577.500} x2={862} y2={634.300} />
      <T x={780.500} y={605} w={72.500}>INTERPRETE</T>
      <T x={797} y={618} w={43}>DE PHP</T>

      <Box x1={977.300} y1={398} x2={1164.500} y2={486.800} />
      <T x={980.800} y={412} w={78.800}>SERVIDOR DE</T>
      <T x={980.800} y={425} w={59.500}>FICHEROS</T>
      <path d="M1083.500 414V480M1083.500 422.500H1108M1083.500 447H1108M1083.500 471.500H1108" />
      <Box x1={1107.800} y1={414.500} x2={1148.300} y2={429.500} />
      <Box x1={1107.800} y1={438.700} x2={1148.300} y2={454.300} />
      <Box x1={1107.800} y1={463.300} x2={1148.300} y2={478.500} />
      <T x={1111} y={425} w={33} size={7.500} italic>index.php</T>
      <T x={1110} y={449} w={36} size={7.500} italic>fichero.css</T>
      <T x={1112} y={473.500} w={31} size={7.500} italic>javascr.js</T>

      <Box x1={977.300} y1={553.500} x2={1164.500} y2={675} />
      <T x={1054.500} y={568} w={33}>SGBD</T>
      <Cylinder x={993.300} />
      <Cylinder x={1091.300} />
      <T x={1009.500} y={656} w={16.500}>BD</T>
      <path d="M985 659.500H1051" />
      <T x={995.500} y={669} w={44}>peliculas</T>

      <DoubleArrow x1={887.500} y1={438.700} x2={977} y2={438.700} />
      <DoubleArrow x1={871} y1={610.500} x2={977} y2={610.500} />
      <DoubleArrow x1={822} y1={537.500} x2={822} y2={577.500} />
      <DoubleArrow x1={862.500} y1={586} x2={985.500} y2={487.500} />
      <T x={912} y={607} w={22.500}>SQL</T>
      <path d="M714.500 514.500v13l3-2.500 2 4.500 2.200-1-2-4.300h3.300z" fill="#fff" stroke="#333" />
    </svg>
  );
}

function ImageViewer() {
  return (
    <div className="absolute top-[66px] left-[113px] flex h-[617px] w-[1003px] flex-col rounded-t-md bg-black shadow-[0_2px_14px_rgba(0,0,0,0.7)]">
      <div className="flex h-[34px] shrink-0 items-center rounded-t-md border-t border-[#6b6961] bg-linear-to-b from-[#5c5a52] to-[#45443f] pb-px pl-[7px] text-[12px]">
        <div className="flex h-[28px] w-[124px] shrink-0 items-center rounded border border-[#3e3d38]">
          <svg viewBox="0 0 11 11" className="ml-[6px] size-[11px] shrink-0"><path d="M0 0h11v11H0z" fill="#dfdbd2" /><path d="M3 5.500h5" stroke="#45443f" strokeWidth="1.800" /></svg>
          <div className="ml-[9px] flex h-[27px] w-[70px] shrink-0 items-center bg-[#fbfbfa] pl-[9px] text-[#55544f]">
            <Label w={33}>100 %</Label>
            <svg viewBox="0 0 10 6" className="ml-[10px] h-[6px] w-[11px] shrink-0"><path d="M.7.700L5 5 9.300.700" fill="none" stroke="#3f3e3a" strokeWidth="1.700" /></svg>
          </div>
          <svg viewBox="0 0 11 11" className="ml-[8px] size-[11px] shrink-0"><path d="M0 0h11v11H0z" fill="#dfdbd2" /><path d="M3 5.500h5M5.500 3v5" stroke="#45443f" strokeWidth="1.800" /></svg>
        </div>
        <div className="ml-[302px] font-bold text-[#dfdbd2]"><Label w={137}>T031-WebDinamica.PNG</Label></div>
        <div className="ml-[305px] flex h-[29px] w-[28px] shrink-0 items-center justify-center rounded border border-[#3e3d38]">
          <svg viewBox="0 0 12 12" className="size-3"><path d="M6.500 0H12v5.500L10 3.700 7.700 6 6 4.300 8.300 2zM5.500 12H0V6.500l2 1.800L4.300 6 6 7.700 3.700 10z" fill="#dfdbd2" /></svg>
        </div>
        <div className="ml-[7px] flex h-[29px] w-[28px] shrink-0 items-center justify-center rounded border border-[#3e3d38]"><BurgerGlyph className="size-[10px]" color="#dfdbd2" /></div>
        <WindowButtons tones={["active", "active", "hot"]} size="size-[15px]" className="ml-[11px] gap-[1.500px]" />
      </div>
      <div className="relative flex flex-1 justify-center pt-12">
        <Diagram />
        <div className="absolute top-[275px] left-[10px] flex size-[34px] items-center justify-center rounded-md bg-[#222627]/70">
          <svg viewBox="0 0 6 10" className="h-[10px] w-[6px]"><path d="M5.500.5L1 5l4.500 4.500" fill="none" stroke="#a8a8a5" strokeWidth="1.500" /></svg>
        </div>
        <div className="absolute top-[275px] left-[959px] flex size-[34px] items-center justify-center rounded-md bg-[#222627]/70">
          <svg viewBox="0 0 6 10" className="h-[10px] w-[6px]"><path d="M.5.5L5 5 .5 9.500" fill="none" stroke="#a8a8a5" strokeWidth="1.500" /></svg>
        </div>
        <div className="absolute top-[540px] left-[469px] flex h-[32px] w-[65px] items-center rounded-md bg-[#171a1b]">
          <div className="flex h-full w-8 items-center justify-center border-r border-[#272a2b]">
            <svg viewBox="0 0 10 11" className="h-[11px] w-[10px]"><path d="M9.500 1H6Q4 1 4 3.500V9M.8 5.800L4 9l3.200-3.200" fill="none" stroke="#4a4b4a" strokeWidth="1.500" /></svg>
          </div>
          <div className="flex h-full flex-1 items-center justify-center">
            <svg viewBox="0 0 10 11" className="h-[11px] w-[10px]"><path d="M.5 1H4Q6 1 6 3.500V9M2.800 5.800L6 9l3.200-3.200" fill="none" stroke="#4a4b4a" strokeWidth="1.500" /></svg>
          </div>
        </div>
      </div>
    </div>
  );
}

function RemoteScreen() {
  return (
    <div className="relative flex h-[736px] w-[1176px] shrink-0 flex-col overflow-hidden">
      <RemoteTopBar />
      <div className="flex min-h-0 flex-1">
        <RemoteDock />
        <BackWindow />
      </div>
      <NestedDesktop />
      <FileManager />
      <ImageViewer />
      <div className="absolute top-0 left-[484px] h-[3px] w-[208px] border-x border-b border-[#222] bg-white" />
    </div>
  );
}

export default function App() {
  return (
    <div className="flex h-[900px] w-[1440px] flex-col overflow-hidden bg-[#f1f0ee] font-[Ubuntu,'Noto_Sans',sans-serif]">
      <HostTopBar />
      <div className="flex min-h-0 flex-1">
        <HostDock />
        <main className="flex min-w-0 flex-1 flex-col">
          <HostWindowChrome />
          <div className="flex h-[738px] shrink-0 rounded-sm border border-[#c3c2be] bg-[#f1f0ee]">
            <div className="ml-[41px] flex w-[1308px] justify-center bg-black">
              <RemoteScreen />
            </div>
          </div>
        </main>
      </div>
    </div>
  );
}
